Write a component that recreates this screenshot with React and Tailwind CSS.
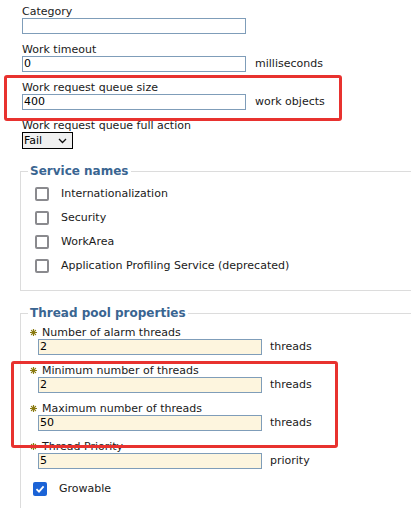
import React from "react";

const font = { fontFamily: "'DejaVu Sans', Verdana, sans-serif" };

function Star() {
  return (
    <svg width="7" height="7" viewBox="0 0 7 7" className="shrink-0">
      <g stroke="#8a7a10" strokeWidth="1.2" strokeLinecap="round">
        <line x1="3.5" y1="0.5" x2="3.5" y2="6.5" />
        <line x1="0.5" y1="3.5" x2="6.5" y2="3.5" />
        <line x1="1.4" y1="1.4" x2="5.6" y2="5.6" />
        <line x1="5.6" y1="1.4" x2="1.4" y2="5.6" />
      </g>
    </svg>
  );
}

function TextField({ label, value, unit }) {
  return (
    <div className="mb-[9px]">
      <div className="h-[13px] leading-[13px] text-[#1a1a1a]">{label}</div>
      <div className="flex items-center h-[16px]">
        <div className="w-[224px] h-[16px] border border-[#7f9db9] bg-white pl-[1px] leading-[14px] text-black">
          {value}
        </div>
        {unit && <span className="ml-[9px] text-[#1a1a1a]">{unit}</span>}
      </div>
    </div>
  );
}

function RequiredField({ label, value, unit }) {
  return (
    <div className="mb-[9px]">
      <div className="h-[13px] leading-[13px] flex items-center text-[#1a1a1a]">
        <span className="ml-[2px] mr-[5px] flex items-center">
          <Star />
        </span>
        {label}
      </div>
      <div className="flex items-center h-[16px] ml-[10px]">
        <div className="w-[224px] h-[16px] border border-[#7f9db9] bg-[#fdf5de] pl-[1px] leading-[14px] text-black">
          {value}
        </div>
        <span className="ml-[8px] text-[#1a1a1a]">{unit}</span>
      </div>
    </div>
  );
}

function Checkbox({ checked }) {
  if (checked) {
    return (
      <span className="w-[14px] h-[14px] rounded-[2px] bg-[#1b63d6] flex items-center justify-center shrink-0">
        <svg width="10" height="10" viewBox="0 0 10 10">
          <path d="M1.5 5.2 L4 7.6 L8.6 2.4" fill="none" stroke="white" strokeWidth="1.8" />
        </svg>
      </span>
    );
  }
  return <span className="w-[14px] h-[14px] rounded-[2px] border-2 border-[#8a8a8e] bg-white shrink-0" />;
}

export default function App() {
  const services = [
    "Internationalization",
    "Security",
    "WorkArea",
    "Application Profiling Service (deprecated)",
  ];

  return (
    <div className="relative w-[411px] h-[508px] overflow-hidden bg-white text-[11px] leading-[14px]" style={font}>
      <div className="pl-[22px] pt-[5px]">
        <TextField label="Category" value="" />
        <TextField label="Work timeout" value="0" unit="milliseconds" />
        <TextField label="Work request queue size" value="400" unit="work objects" />
        <div>
          <div className="h-[13px] leading-[13px] text-[#1a1a1a]">Work request queue full action</div>
          <div className="w-[51px] h-[17px] border border-black bg-[#f0f0f0] flex items-center justify-between pl-[1px] pr-[5px] text-black">
            <span>Fail</span>
            <svg width="9" height="6" viewBox="0 0 9 6">
              <path d="M1 1 L4.5 4.5 L8 1" fill="none" stroke="#111" strokeWidth="1.3" />
            </svg>
          </div>
        </div>
      </div>

      {/* Service names */}
      <fieldset className="ml-[20px] mt-[15px] w-[420px] border border-[#dcdcdc] pl-[7px]">
        <legend className="px-[2px] leading-[14px] text-[12px] font-bold text-[#3a6591]">Service names</legend>
        <div className="pl-[7px] pt-[4px] pb-[12px]">
          {services.map((s) => (
            <div key={s} className="h-[24px] flex items-center">
              <Checkbox />
              <span className="ml-[12px] text-[#1a1a1a]">{s}</span>
            </div>
          ))}
        </div>
      </fieldset>

      {/* Thread pool properties */}
      <fieldset className="ml-[20px] mt-[15px] w-[420px] h-[260px] border border-[#dcdcdc] pl-[7px]">
        <legend className="px-[2px] leading-[14px] text-[12px] font-bold text-[#3a6591]">Thread pool properties</legend>
        <div className="pt-[6px]">
          <RequiredField label="Number of alarm threads" value="2" unit="threads" />
          <RequiredField label="Minimum number of threads" value="2" unit="threads" />
          <RequiredField label="Maximum number of threads" value="50" unit="threads" />
          <RequiredField label="Thread Priority" value="5" unit="priority" />
          <div className="flex items-center mt-[13px] ml-[5px]">
            <Checkbox checked />
            <span className="ml-[12px] text-[#1a1a1a]">Growable</span>
          </div>
        </div>
      </fieldset>

      {/* highlight boxes */}
      <div className="absolute left-[4px] top-[75px] w-[338px] h-[46px] border-[3px] border-[#e8322f] rounded-[3px]" />
      <div className="absolute left-[11px] top-[361px] w-[327px] h-[87px] border-[3px] border-[#e8322f] rounded-[3px]" />
    </div>
  );
}
